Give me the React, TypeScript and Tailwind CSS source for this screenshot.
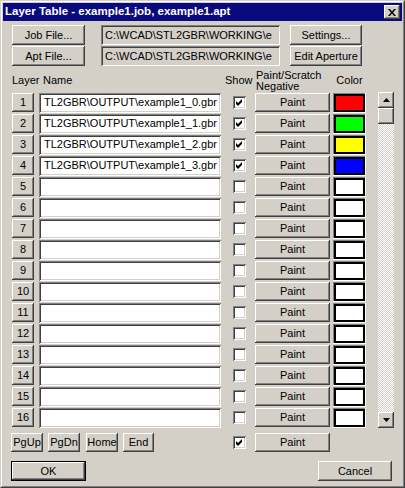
import React from 'react';

const raised =
  'bg-[#d4d0c8] shadow-[inset_-1px_-1px_#404040,inset_1px_1px_#ffffff,inset_-2px_-2px_#808080,inset_2px_2px_#d4d0c8]';
const sunken =
  'shadow-[inset_1px_1px_#808080,inset_-1px_-1px_#ffffff,inset_2px_2px_#404040,inset_-2px_-2px_#d4d0c8]';

const Btn: React.FC<{ label: string; className?: string }> = ({ label, className = '' }) => (
  <div className={`${raised} flex items-center justify-center text-black leading-none shrink-0 ${className}`}>
    {label}
  </div>
);

const Check: React.FC<{ checked: boolean; className?: string }> = ({ checked, className = '' }) => (
  <div className={`w-[13px] h-[13px] bg-white ${sunken} shrink-0 relative ${className}`}>
    {checked && (
      <svg width="13" height="13" viewBox="0 0 13 13" className="absolute left-0 top-0">
        <path d="M3 5 L5 7 L9 3 L9 6 L5 10 L3 8 Z" fill="#000" />
      </svg>
    )}
  </div>
);

const names = [
  'TL2GBR\\OUTPUT\\example1_0.gbr',
  'TL2GBR\\OUTPUT\\example1_1.gbr',
  'TL2GBR\\OUTPUT\\example1_2.gbr',
  'TL2GBR\\OUTPUT\\example1_3.gbr',
  ...Array(12).fill(''),
];
const colors = ['bg-[#ff0000]', 'bg-[#00ff00]', 'bg-[#ffff00]', 'bg-[#0000ff]', ...Array(12).fill('bg-white')];

export default function App() {
  return (
    <div className="w-[405px] h-[488px] bg-[#d4d0c8] border border-t-[#d4d0c8] border-l-[#d4d0c8] border-b-[#404040] border-r-[#404040] font-['Liberation_Sans',Arial,sans-serif] text-[11px] text-black">
      <div className="h-full border border-t-white border-l-white border-b-[#808080] border-r-[#808080] p-px flex flex-col">
        {/* Title bar */}
        <div className="h-[18px] bg-[#0a0a80] flex items-center justify-between pl-[2px] pr-[2px] shrink-0">
          <span className="text-white font-bold text-[11.5px] leading-none">Layer Table - example1.job, example1.apt</span>
          <div className={`${raised} w-[16px] h-[14px] flex items-center justify-center`}>
            <svg width="8" height="7" viewBox="0 0 8 7">
              <path d="M0 0 L2 0 L4 2.5 L6 0 L8 0 L5 3.5 L8 7 L6 7 L4 4.5 L2 7 L0 7 L3 3.5 Z" fill="#000" />
            </svg>
          </div>
        </div>

        {/* Client */}
        <div className="flex-1 flex flex-col pl-[9px]">
          <div className="flex mt-[4px] h-[20px]">
            <Btn label="Job File..." className="w-[73px] h-[20px]" />
            <div className={`ml-[16px] w-[179px] h-[20px] ${sunken} pl-[4px] flex items-center overflow-hidden whitespace-nowrap`}>
              C:\WCAD\STL2GBR\WORKING\e
            </div>
            <Btn label="Settings..." className="ml-[10px] w-[72px] h-[20px]" />
          </div>
          <div className="flex mt-[1px] h-[20px]">
            <Btn label="Apt File..." className="w-[73px] h-[20px]" />
            <div className={`ml-[16px] w-[179px] h-[20px] ${sunken} pl-[4px] flex items-center overflow-hidden whitespace-nowrap`}>
              C:\WCAD\STL2GBR\WORKING\e
            </div>
            <Btn label="Edit Aperture" className="ml-[10px] w-[72px] h-[20px]" />
          </div>

          {/* Header */}
          <div className="flex items-center h-[26px] pt-[3px]">
            <div className="w-[213px] flex">
              <span className="w-[31px]">Layer</span>
              <span>Name</span>
            </div>
            <div className="w-[30px]">Show</div>
            <div className="w-[78px] pl-px leading-[11px]">
              Paint/Scratch
              <br />
              Negative
            </div>
            <div className="w-[33px] text-center">Color</div>
          </div>

          {/* Rows + scrollbar */}
          <div className="flex">
            <div className="flex flex-col">
              {names.map((n, i) => (
                <div key={i} className="flex items-center h-[21px]">
                  <Btn label={String(i + 1)} className="w-[22px] h-[19px]" />
                  <div className={`ml-[5px] w-[182px] h-[20px] bg-white ${sunken} pl-[5px] flex items-center overflow-hidden whitespace-nowrap`}>
                    {n}
                  </div>
                  <Check checked={i < 4} className="ml-[12px]" />
                  <Btn label="Paint" className="ml-[9px] w-[75px] h-[19px]" />
                  <div className="ml-[3px] w-[33px] h-[20px] p-px bg-[#808080] shadow-[inset_-1px_-1px_#ffffff]">
                    <div className={`w-full h-full border-2 border-black ${colors[i]}`} />
                  </div>
                </div>
              ))}
            </div>
            <div className="ml-[12px] w-[16px] flex flex-col">
              <div className={`${raised} w-[16px] h-[16px] flex items-center justify-center`}>
                <svg width="7" height="4" viewBox="0 0 7 4">
                  <polygon points="3.5,0 7,4 0,4" fill="#000" />
                </svg>
              </div>
              <div className={`${raised} w-[16px] h-[16px]`} />
              <div className="flex-1 bg-[repeating-conic-gradient(#d4d0c8_0%_25%,#ffffff_0%_50%)] bg-[length:2px_2px]" />
              <div className={`${raised} w-[16px] h-[16px] flex items-center justify-center`}>
                <svg width="7" height="4" viewBox="0 0 7 4">
                  <polygon points="0,0 7,0 3.5,4" fill="#000" />
                </svg>
              </div>
            </div>
          </div>

          {/* Paging row */}
          <div className="flex items-center mt-[5px] h-[19px]">
            <Btn label="PgUp" className="-ml-px w-[32px] h-[19px]" />
            <Btn label="PgDn" className="ml-[5px] w-[32px] h-[19px]" />
            <Btn label="Home" className="ml-[6px] w-[32px] h-[19px]" />
            <Btn label="End" className="ml-[5px] w-[31px] h-[19px]" />
            <Check checked className="ml-[79px]" />
            <Btn label="Paint" className="ml-[9px] w-[75px] h-[19px]" />
          </div>

          {/* OK / Cancel */}
          <div className="flex mt-[9px] h-[20px] pr-[10px]">
            <div className="-ml-px w-[75px] h-[20px] border border-black">
              <Btn label="OK" className="w-full h-full" />
            </div>
            <Btn label="Cancel" className="ml-auto w-[74px] h-[20px]" />
          </div>
        </div>
      </div>
    </div>
  );
}
